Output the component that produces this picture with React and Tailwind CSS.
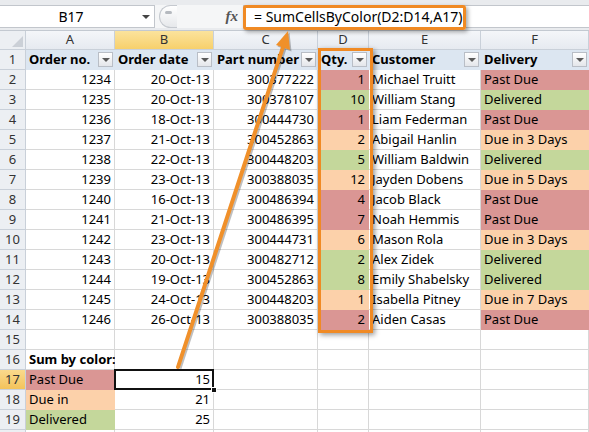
import React from 'react';

const RED = 'bg-[#da9694] border-[#da9694]';
const GREEN = 'bg-[#c4d79b] border-[#c4d79b]';
const PEACH = 'bg-[#fcd1aa] border-[#fcd1aa]';

const fillFor = (status) => {
  if (status === 'Past Due') return RED;
  if (status === 'Delivered') return GREEN;
  return PEACH;
};

const orders = [
  ['1234', '20-Oct-13', '300377222', '1', 'Michael Truitt', 'Past Due'],
  ['1235', '20-Oct-13', '300378107', '10', 'William Stang', 'Delivered'],
  ['1236', '18-Oct-13', '300444730', '1', 'Liam Federman', 'Past Due'],
  ['1237', '21-Oct-13', '300452863', '2', 'Abigail Hanlin', 'Due in 3 Days'],
  ['1238', '22-Oct-13', '300448203', '5', 'William Baldwin', 'Delivered'],
  ['1239', '23-Oct-13', '300388035', '12', 'Jayden Dobens', 'Due in 5 Days'],
  ['1240', '16-Oct-13', '300486394', '4', 'Jacob Black', 'Past Due'],
  ['1241', '21-Oct-13', '300486395', '7', 'Noah Hemmis', 'Past Due'],
  ['1242', '23-Oct-13', '300444731', '6', 'Mason Rola', 'Due in 3 Days'],
  ['1243', '20-Oct-13', '300482712', '2', 'Alex Zidek', 'Delivered'],
  ['1244', '19-Oct-13', '300452863', '8', 'Emily Shabelsky', 'Delivered'],
  ['1245', '24-Oct-13', '300448203', '1', 'Isabella Pitney', 'Due in 7 Days'],
  ['1246', '26-Oct-13', '300388035', '2', 'Aiden Casas', 'Past Due'],
];

const headers = ['Order no.', 'Order date', 'Part number', 'Qty.', 'Customer', 'Delivery'];

const FilterButton = () => (
  <span className="flex h-[15px] w-[15px] shrink-0 items-center justify-center border border-[#b9bec6] bg-gradient-to-b from-white to-[#e4e6ea]">
    <span className="h-0 w-0 border-l-[4px] border-r-[4px] border-t-[4px] border-l-transparent border-r-transparent border-t-[#5a5a5a]" />
  </span>
);

const RowHead = ({ n, active }) => (
  <div
    className={`flex items-center justify-center border-b border-r border-[#c9d0d9] text-[13px] text-[#333] ${
      active ? 'bg-gradient-to-b from-[#f9d98c] to-[#f3c35a]' : 'bg-[#eceff3]'
    }`}
  >
    {n}
  </div>
);

const Cell = ({ children, right, fill, bold, className = '' }) => (
  <div
    className={`flex items-center overflow-visible whitespace-nowrap border-b border-r px-[3px] text-[13px] text-black ${
      right ? 'justify-end' : 'justify-start'
    } ${fill || 'border-[#d8d8d8] bg-white'} ${bold ? 'font-bold' : ''} ${className}`}
  >
    {children}
  </div>
);

export default function App() {
  return (
    <div className="relative h-[432px] w-[589px] overflow-hidden bg-white font-['Noto_Sans',sans-serif]">
      {/* formula bar */}
      <div className="flex h-[31px] border-b border-[#c3c9d1] bg-[#e9ebee] pb-[2px] pt-[5px]">
        <div className="flex w-[155px] items-center border border-l-0 border-[#c2c6cc] bg-white">
          <span className="flex-1 text-center text-[14px] text-black">B17</span>
          <span className="mr-[4px] h-0 w-0 border-l-[4px] border-r-[4px] border-t-[4px] border-l-transparent border-r-transparent border-t-[#444]" />
        </div>
        <div className="flex w-[88px] items-center bg-[#f5f6f7]">
          <div className="ml-[4px] flex h-[23px] w-[18px] justify-center rounded-l-full border border-r-0 border-[#c5c9cf] bg-gradient-to-b from-white to-[#e6e8eb] pt-[5px]">
            <span className="h-[3px] w-[7px] rounded-full bg-[#b5b9bf]" />
          </div>
          <span className="ml-auto mr-[5px] font-['Liberation_Serif',serif] text-[15px] font-bold italic text-[#555]">fx</span>
        </div>
        <div className="flex flex-1 items-center border border-r-0 border-[#c2c6cc] bg-white pl-[10px]">
          <span className="text-[14px] text-black">= SumCellsByColor(D2:D14,A17)</span>
        </div>
      </div>

      {/* sheet grid */}
      <div className="grid grid-cols-[26px_89px_99px_104px_51px_112px_1fr] grid-rows-[19px_repeat(20,20px)]">
        <div className="relative border-b border-r border-[#c9d0d9] bg-[#eceff3]">
          <svg className="absolute bottom-[2px] right-[2px]" width="11" height="11" viewBox="0 0 11 11">
            <polygon points="11,0 11,11 0,11" fill="#cbd0d7" />
          </svg>
        </div>
        {['A', 'B', 'C', 'D', 'E', 'F'].map((l) => (
          <div
            key={l}
            className={`flex items-center justify-center border-b border-r border-[#c9d0d9] text-[13px] text-[#333] ${
              l === 'B' ? 'bg-gradient-to-b from-[#fbe39c] to-[#f7d06b]' : 'bg-gradient-to-b from-[#f4f6f9] to-[#e6eaf0]'
            }`}
          >
            {l}
          </div>
        ))}

        <RowHead n={1} />
        {headers.map((h) => (
          <div
            key={h}
            className="flex items-center justify-between border-b border-r border-[#dce6f1] bg-[#dce6f1] pl-[3px] pr-[1px] text-[13px] font-bold text-black"
          >
            <span className="whitespace-nowrap">{h}</span>
            <FilterButton />
          </div>
        ))}

        {orders.map((o, i) => (
          <React.Fragment key={o[0]}>
            <RowHead n={i + 2} />
            <Cell right>{o[0]}</Cell>
            <Cell right>{o[1]}</Cell>
            <Cell right>{o[2]}</Cell>
            <Cell right fill={fillFor(o[5])}>{o[3]}</Cell>
            <Cell>{o[4]}</Cell>
            <Cell fill={fillFor(o[5])}>{o[5]}</Cell>
          </React.Fragment>
        ))}

        <RowHead n={15} />
        <Cell /><Cell /><Cell /><Cell /><Cell /><Cell />

        <RowHead n={16} />
        <Cell bold>Sum by color:</Cell>
        <Cell /><Cell /><Cell /><Cell /><Cell />

        <RowHead n={17} active />
        <Cell fill={RED}>Past Due</Cell>
        <Cell right className="relative">
          15
          <span className="absolute inset-[-1px] border-2 border-[#111]" />
          <span className="absolute bottom-[-4px] right-[-4px] h-[6px] w-[6px] border border-white bg-[#111]" />
        </Cell>
        <Cell /><Cell /><Cell /><Cell />

        <RowHead n={18} />
        <Cell fill={PEACH}>Due in</Cell>
        <Cell right>21</Cell>
        <Cell /><Cell /><Cell /><Cell />

        <RowHead n={19} />
        <Cell fill={GREEN}>Delivered</Cell>
        <Cell right>25</Cell>
        <Cell /><Cell /><Cell /><Cell />

        <RowHead n="" />
        <Cell /><Cell /><Cell /><Cell /><Cell /><Cell />
      </div>

      {/* callout frames */}
      <div className="pointer-events-none absolute left-[243px] top-[5px] h-[25px] w-[223px] rounded-[3px] border-[3px] border-[#f08a24] shadow-[2px_2px_4px_rgba(0,0,0,0.35)]" />
      <div className="pointer-events-none absolute left-[318px] top-[48px] h-[285px] w-[55px] border-[3px] border-[#f08a24] shadow-[2px_2px_5px_rgba(0,0,0,0.4)]" />

      {/* arrow */}
      <svg className="pointer-events-none absolute left-0 top-0" width="589" height="432" viewBox="0 0 589 432">
        <line x1="178" y1="367" x2="283" y2="47" stroke="rgba(0,0,0,0.25)" strokeWidth="4" transform="translate(1.5 1.5)" />
        <polygon points="288,31 290,50 276,45" fill="rgba(0,0,0,0.25)" transform="translate(1.5 1.5)" />
        <line x1="178" y1="367" x2="283" y2="47" stroke="#f0902a" strokeWidth="4" strokeLinecap="round" />
        <polygon points="288,31 290,50 276,45" fill="#f0902a" />
      </svg>
    </div>
  );
}
